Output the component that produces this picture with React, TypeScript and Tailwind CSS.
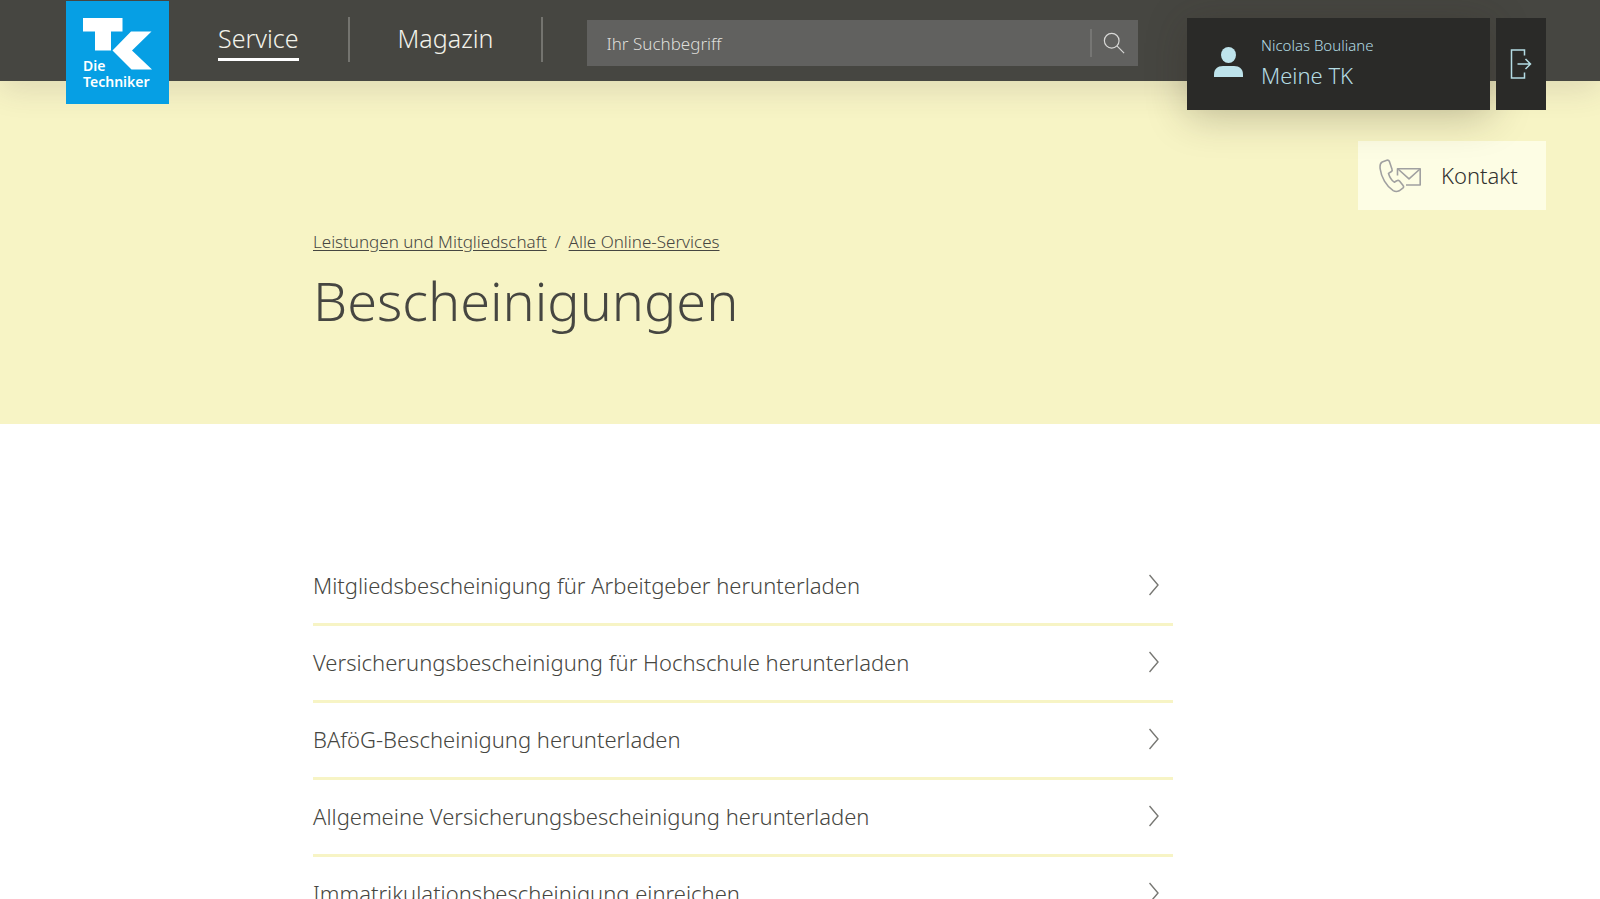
import React from 'react';

const services = [
  'Mitgliedsbescheinigung für Arbeitgeber herunterladen',
  'Versicherungsbescheinigung für Hochschule herunterladen',
  'BAföG-Bescheinigung herunterladen',
  'Allgemeine Versicherungsbescheinigung herunterladen',
  'Immatrikulationsbescheinigung einreichen',
];

const Logo: React.FC = () => (
  <a
    href="#home"
    className="mt-px h-[103px] w-[103px] shrink-0 bg-[#069fe4] pl-[17px] pt-[17px] text-sm leading-4 font-semibold text-white"
  >
    <svg width="70" height="52" viewBox="0 0 70 52" fill="currentColor" aria-hidden="true">
      <path d="M0 0h39.500v13.500h-11.500v19H12v-19H0z" />
      <path d="M48 13.500h20.500L49 32.500l20 19H48.500l-19-19z" />
    </svg>
    <span className="-mt-3 block">Die</span>
    <span className="block">Techniker</span>
  </a>
);

const App: React.FC = () => {
  return (
    <div className="min-h-screen bg-white font-['Noto_Sans','Open_Sans',sans-serif] font-light text-[#464641]">
      {/* Header */}
      <header className="relative z-10 flex h-[81px] items-start bg-[#464641] pl-[66px] pr-[54px] shadow-[0_8px_32px_rgba(70,50,70,0.14)]">
        <Logo />

        <nav className="flex pt-[17px] text-[25px] leading-[34px] text-[#f2f2ea]">
          <div className="flex h-[45px] border-r-2 border-[#74746f] px-[49px]">
            <a href="#service" className="h-11 border-b-3 border-white pt-1">
              Service
            </a>
          </div>
          <div className="flex h-[45px] border-r-2 border-[#74746f] px-12">
            <a href="#magazin" className="h-11 pt-1">
              Magazin
            </a>
          </div>
        </nav>

        <form className="ml-11 mt-5 flex h-[46px] min-w-0 flex-1 items-center bg-[#61615f]">
          <input
            type="text"
            aria-label="Suchbegriff"
            placeholder="Ihr Suchbegriff"
            className="h-full min-w-0 flex-1 bg-transparent pl-[19px] text-[17px] text-white outline-none placeholder:text-[#dededa]"
          />
          <button
            type="button"
            aria-label="Suchen"
            className="flex h-7 w-12 items-center justify-center border-l-2 border-[#767674] pr-0.5 text-[#d8d8d6]"
          >
            <svg width="22" height="22" viewBox="0 0 24 24" fill="none" stroke="currentColor" strokeWidth="1.300">
              <circle cx="9.500" cy="9.500" r="8" />
              <path d="M15.200 15.200 23 23" />
            </svg>
          </button>
        </form>

        <a
          href="#meine-tk"
          className="ml-[49px] mt-[18px] flex h-[92px] w-[303px] shrink-0 items-center bg-[#2a2a28] pl-[27px] text-[#b4dce4] shadow-[0_6px_40px_rgba(50,40,30,0.28)]"
        >
          <svg width="29" height="30" viewBox="0 0 29 30" fill="#bee3eb" className="-mt-1 shrink-0" aria-hidden="true">
            <ellipse cx="14.500" cy="8" rx="7.500" ry="8" />
            <path d="M0 30v-2.500C0 22 3.500 19 9 19h11c5.500 0 9 3 9 8.500V30z" />
          </svg>
          <span className="ml-[18px] pb-0.5">
            <span className="block text-[15px] leading-6">Nicolas Bouliane</span>
            <span className="block text-[22px] leading-9">Meine TK</span>
          </span>
        </a>
        <button
          type="button"
          aria-label="Abmelden"
          className="ml-1.5 mt-[18px] flex h-[92px] w-[50px] shrink-0 items-center justify-center bg-[#2a2a28] text-[#b4dce4]"
        >
          <svg width="22" height="30" viewBox="0 0 22 30" fill="none" stroke="currentColor" strokeWidth="1.500">
            <path d="M14.500 6.500V1H1.500v28h13v-5.500" />
            <path d="M7.500 15H20.500M15.500 10l5 5-5 5" />
          </svg>
        </button>
      </header>

      {/* Hero */}
      <section className="h-[343px] bg-[#f7f4c5]">
        <div className="flex justify-end pr-[54px] pt-[60px]">
          <a
            href="#kontakt"
            className="flex h-[69px] w-[188px] items-center bg-[#fdfde4] pl-[21px] text-[22px] text-[#333330]"
          >
            <svg
              width="42"
              height="34"
              viewBox="0 0 42 34"
              fill="none"
              stroke="#a0a0a0"
              strokeWidth="1.600"
              strokeLinejoin="round"
              aria-hidden="true"
            >
              <path d="M7.800 1.200 3.200 3C1 4 .8 7 1.200 10c1 8 6 17 13 21.600 2 1.200 4 1.200 6 .2l3.600-2.600c1-.8 1-1.800.3-2.600l-3.600-4.600c-.8-.8-1.800-.9-2.800-.2l-2.400 1.400c-2.600-1.800-4.600-5-5.800-8.800l2.600-1.600c1-.6 1.300-1.600.9-2.600L10.400 2.400c-.5-1.100-1.500-1.500-2.600-1.200z" />
              <path d="M18.500 16.500v-6.700h22.700V26H27" />
              <path d="m19 10 11 9.800L41 10" />
            </svg>
            <span className="ml-5">Kontakt</span>
          </a>
        </div>

        <div className="pl-[313px]">
          <nav aria-label="Brotkrumen" className="mt-5 flex gap-2 text-[17px] leading-6">
            <a href="#leistungen" className="underline underline-offset-2">
              Leistungen und Mitgliedschaft
            </a>
            <span>/</span>
            <a href="#online-services" className="underline underline-offset-2">
              Alle Online-Services
            </a>
          </nav>
          <h1 className="mt-2 text-[54px] leading-[76px]">Bescheinigungen</h1>
        </div>
      </section>

      {/* Services */}
      <main className="pl-[313px] pr-[54px] pt-[125px]">
        <ul className="max-w-[860px]">
          {services.map((service) => (
            <li key={service} className="border-b-3 border-[#f7f4c5]">
              <a href="#bescheinigung" className="flex h-[74px] items-center justify-between pb-0.5 pr-3.5 text-[22px]">
                {service}
                <svg width="10" height="22" viewBox="0 0 10 22" fill="none" stroke="#777773" strokeWidth="1.400" aria-hidden="true">
                  <path d="m.5 1 8.500 10-8.500 10" />
                </svg>
              </a>
            </li>
          ))}
        </ul>
      </main>
    </div>
  );
};

export default App;
